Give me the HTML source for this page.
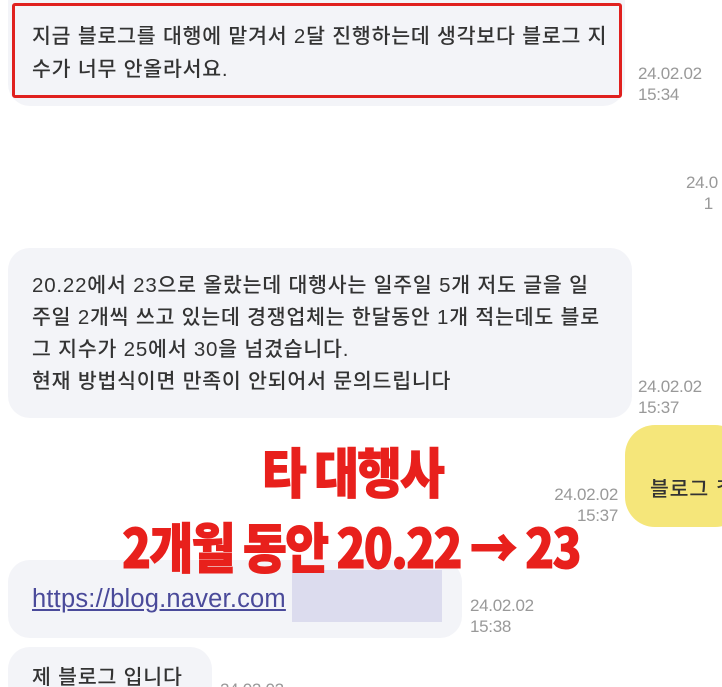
<!DOCTYPE html>
<html><head><meta charset="utf-8"><style>
html,body{margin:0;padding:0;width:722px;height:687px;overflow:hidden;background:#fff;position:relative;font-family:"Liberation Sans","Noto Sans CJK KR",sans-serif;}
.b{position:absolute;background:#f3f4f8;border-radius:22px;}
.t{position:absolute;color:#333;font-size:20.5px;line-height:32px;white-space:nowrap;letter-spacing:0.8px;font-weight:500;}
.ts{position:absolute;color:#999;font-size:17px;line-height:21px;letter-spacing:-0.3px;}
.red{position:absolute;color:#e8201c;font-family:"Noto Sans CJK KR",sans-serif;font-weight:900;white-space:nowrap;transform-origin:left top;letter-spacing:-2px;-webkit-text-stroke:1px #e8201c;}
</style></head><body>
<div class="b" style="left:8px;top:-20px;width:617px;height:126px"></div>
<div style="position:absolute;left:12px;top:3px;width:604px;height:89px;border:3px solid #e0201e;border-radius:3px"></div>
<div class="t" style="left:32px;top:21px">지금 블로그를 대행에 맡겨서 2달 진행하는데 생각보다 블로그 지</div>
<div class="t" style="left:32px;top:54px">수가 너무 안올라서요.</div>
<div class="ts" style="left:638px;top:63px">24.02.02<br>15:34</div>
<div class="ts" style="left:686px;top:172px">24.0<br>&nbsp;&nbsp;&nbsp;&nbsp;1</div>

<div class="b" style="left:8px;top:248px;width:624px;height:170px"></div>
<div class="t" style="left:32px;top:270px;line-height:32px">20.22에서 23으로 올랐는데 대행사는 일주일 5개 저도 글을 일<br>주일 2개씩 쓰고 있는데 경쟁업체는 한달동안 1개 적는데도 블로<br>그 지수가 25에서 30을 넘겼습니다.<br>현재 방법식이면 만족이 안되어서 문의드립니다</div>
<div class="ts" style="left:638px;top:376px">24.02.02<br>15:37</div>

<div class="b" style="left:625px;top:425px;width:120px;height:102px;background:#f5e67a;border-radius:30px"></div>
<div class="t" style="left:650px;top:474px">블로그 ᄌ</div>
<div class="ts" style="left:538px;top:484px;text-align:right;width:80px">24.02.02<br>15:37</div>

<div class="b" style="left:8px;top:560px;width:454px;height:78px"></div>
<div style="position:absolute;left:292px;top:570px;width:150px;height:52px;background:#dcdcee"></div>
<div class="t" style="left:32px;top:583px;color:#4a4a9a;text-decoration:underline;font-size:25.5px;letter-spacing:0.2px">https://blog.naver.com</div>
<div class="ts" style="left:470px;top:595px">24.02.02<br>15:38</div>

<div class="b" style="left:8px;top:647px;width:204px;height:60px"></div>
<div class="t" style="left:32px;top:662px">제 블로그 입니다</div>
<div class="ts" style="left:220px;top:679px">24.02.02</div>

<div class="red" style="left:262px;top:437px;font-size:54px;line-height:66px;transform:scaleX(0.9)">타 대행사</div>
<div class="red" style="left:122px;top:512px;font-size:54px;line-height:66px;transform:scaleX(0.885)">2개월 동안 20.22 → 23</div>
</body></html>
